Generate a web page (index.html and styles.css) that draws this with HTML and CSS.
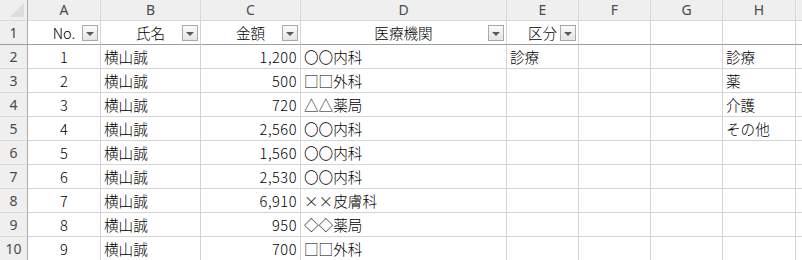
FILE: index.html
```html
<!DOCTYPE html>
<html lang="ja">
<head>
  <meta charset="UTF-8">
  <title>医療費一覧</title>
  <link rel="stylesheet" href="styles.css">
</head>
<body>

<div class="sheet">
  <!-- en-têtes de colonnes -->
  <div class="corner"></div>
  <div class="colhead">A</div>
  <div class="colhead">B</div>
  <div class="colhead">C</div>
  <div class="colhead">D</div>
  <div class="colhead">E</div>
  <div class="colhead">F</div>
  <div class="colhead">G</div>
  <div class="colhead">H</div>
  <div class="colhead"></div>

  <!-- ligne 1 : titres avec filtres -->
  <div class="rowhead title">1</div>
  <div class="cell title center">No.<span class="filter"></span></div>
  <div class="cell title center">氏名<span class="filter"></span></div>
  <div class="cell title center">金額<span class="filter"></span></div>
  <div class="cell title center">医療機関<span class="filter"></span></div>
  <div class="cell title center">区分<span class="filter"></span></div>
  <div class="cell title"></div>
  <div class="cell title"></div>
  <div class="cell title"></div>
  <div class="cell title"></div>

  <div class="rowhead">2</div>
  <div class="cell center">1</div><div class="cell">横山誠</div><div class="cell num">1,200</div><div class="cell">〇〇内科</div>
  <div class="cell">診療</div><div class="cell"></div><div class="cell"></div><div class="cell">診療</div><div class="cell"></div>

  <div class="rowhead">3</div>
  <div class="cell center">2</div><div class="cell">横山誠</div><div class="cell num">500</div><div class="cell">□□外科</div>
  <div class="cell"></div><div class="cell"></div><div class="cell"></div><div class="cell">薬</div><div class="cell"></div>

  <div class="rowhead">4</div>
  <div class="cell center">3</div><div class="cell">横山誠</div><div class="cell num">720</div><div class="cell">△△薬局</div>
  <div class="cell"></div><div class="cell"></div><div class="cell"></div><div class="cell">介護</div><div class="cell"></div>

  <div class="rowhead">5</div>
  <div class="cell center">4</div><div class="cell">横山誠</div><div class="cell num">2,560</div><div class="cell">〇〇内科</div>
  <div class="cell"></div><div class="cell"></div><div class="cell"></div><div class="cell">その他</div><div class="cell"></div>

  <div class="rowhead">6</div>
  <div class="cell center">5</div><div class="cell">横山誠</div><div class="cell num">1,560</div><div class="cell">〇〇内科</div>
  <div class="cell"></div><div class="cell"></div><div class="cell"></div><div class="cell"></div><div class="cell"></div>

  <div class="rowhead">7</div>
  <div class="cell center">6</div><div class="cell">横山誠</div><div class="cell num">2,530</div><div class="cell">〇〇内科</div>
  <div class="cell"></div><div class="cell"></div><div class="cell"></div><div class="cell"></div><div class="cell"></div>

  <div class="rowhead">8</div>
  <div class="cell center">7</div><div class="cell">横山誠</div><div class="cell num">6,910</div><div class="cell">××皮膚科</div>
  <div class="cell"></div><div class="cell"></div><div class="cell"></div><div class="cell"></div><div class="cell"></div>

  <div class="rowhead">9</div>
  <div class="cell center">8</div><div class="cell">横山誠</div><div class="cell num">950</div><div class="cell">◇◇薬局</div>
  <div class="cell"></div><div class="cell"></div><div class="cell"></div><div class="cell"></div><div class="cell"></div>

  <div class="rowhead">10</div>
  <div class="cell center">9</div><div class="cell">横山誠</div><div class="cell num">700</div><div class="cell">□□外科</div>
  <div class="cell"></div><div class="cell"></div><div class="cell"></div><div class="cell"></div><div class="cell"></div>
</div>

</body>
</html>
```

FILE: styles.css
```css
* { margin: 0; padding: 0; box-sizing: border-box; }
body {
  background: #fff;
  font-family: "Noto Sans CJK JP", sans-serif;
  color: #000;
  overflow: hidden;
}

/* grille façon tableur */
.sheet {
  display: grid;
  grid-template-columns: 28px 73px 100px 100px 206px 72px 72px 72px 73px 1fr;
  grid-template-rows: 21px repeat(10, 24px);
  width: 802px;
}

.corner {
  background: #efefef;
  border-right: 1px solid #ababab;
  border-bottom: 1px solid #d8d8d8;
  position: relative;
}
.corner::after {
  content: "";
  position: absolute;
  right: 3px; bottom: 3px;
  border-left: 14px solid transparent;
  border-bottom: 14px solid #dcdcdc;
}

.colhead {
  background: #efefef;
  border-right: 1px solid #d8d8d8;
  border-bottom: 1px solid #d8d8d8;
  font-family: "Noto Sans", sans-serif;
  font-size: 14px;
  color: #4a4a4a;
  display: flex;
  align-items: center;
  justify-content: center;
  line-height: 1;
}

.rowhead {
  background: #efefef;
  border-right: 1px solid #ababab;
  border-bottom: 1px solid #d8d8d8;
  font-family: "Noto Sans", sans-serif;
  font-size: 14px;
  color: #4a4a4a;
  display: flex;
  align-items: center;
  justify-content: center;
  line-height: 1;
}

.cell {
  border-right: 1px solid #d4d4d4;
  border-bottom: 1px solid #d4d4d4;
  font-size: 14.6px;
  font-weight: 300;
  line-height: 1;
  display: flex;
  align-items: center;
  padding: 1px 3px 0;
  white-space: nowrap;
  overflow: hidden;
  position: relative;
}
.cell.center { justify-content: center; }
.cell.num { justify-content: flex-end; letter-spacing: 0.5px; }

.title { border-bottom: 1px solid #9e9e9e; }
.rowhead.title { border-bottom-color: #9e9e9e; }

/* bouton de filtre */
.filter {
  position: absolute;
  right: 2px;
  bottom: 3px;
  width: 16px;
  height: 16px;
  border: 1px solid #a9a9a9;
  background: linear-gradient(#fbfbfb, #e4e4e4);
}
.filter::after {
  content: "";
  position: absolute;
  left: 3px; top: 6px;
  border-left: 4px solid transparent;
  border-right: 4px solid transparent;
  border-top: 4px solid #5a5a5a;
}
```
